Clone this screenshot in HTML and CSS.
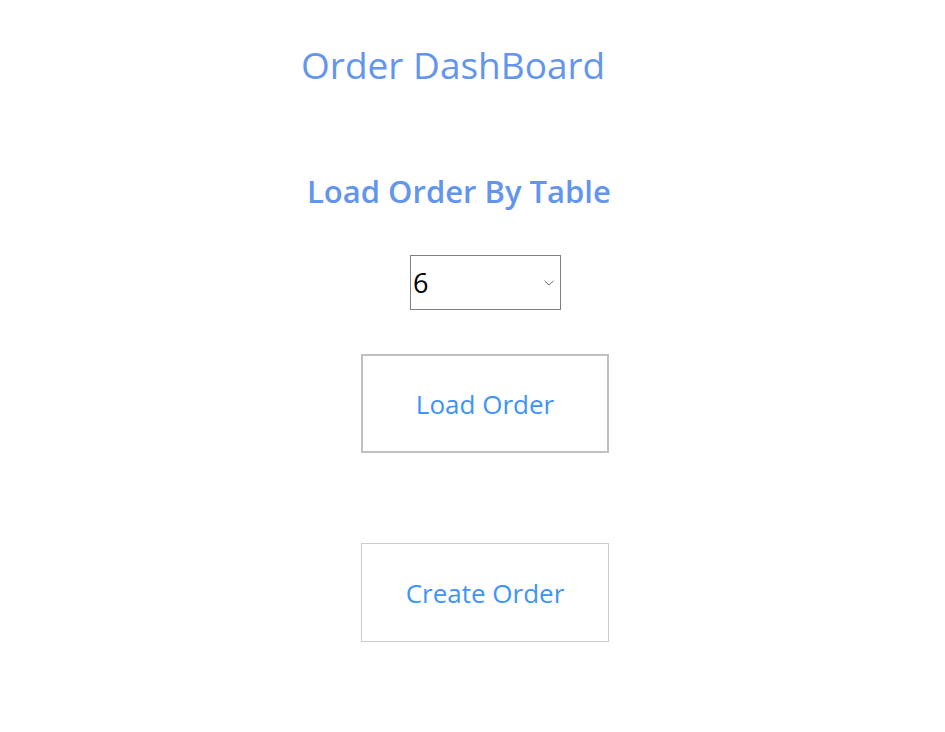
FILE: index.html
```html
<!DOCTYPE html>
<html>
<head>
<meta charset="utf-8">
<link rel="stylesheet" href="styles.css">
</head>
<body>
<div class="page">
  <h1 class="title">Order DashBoard</h1>
  <h2 class="subtitle">Load Order By Table</h2>
  <div class="select-wrap">
    <select class="table-select">
      <option>1</option><option>2</option><option>3</option><option>4</option><option>5</option>
      <option selected>6</option>
    </select>
    <svg class="chevron" width="10" height="6" viewBox="0 0 10 6"><path d="M0.5 0.8 L5 5 L9.5 0.8" fill="none" stroke="#707070" stroke-width="1"/></svg>
  </div>
  <button class="btn btn-load">Load Order</button>
  <button class="btn btn-create">Create Order</button>
</div>
</body>
</html>
```
FILE: styles.css
```css
html, body { margin: 0; padding: 0; background: #fff; }
body { font-family: "Open Sans", "Noto Sans", sans-serif; }
.page {
  display: flex;
  flex-direction: column;
  align-items: flex-start;
}
.title {
  margin: 41px 0 0 301px;
  font-size: 37px;
  font-weight: 400;
  line-height: 48px;
  color: #6495ed;
}
.subtitle {
  margin: 82px 0 0 307px;
  font-size: 31px;
  font-weight: 600;
  line-height: 40px;
  color: #6495ed;
}
.select-wrap {
  position: relative;
  margin: 44px 0 0 410px;
  width: 151px;
  height: 55px;
}
.table-select {
  appearance: none;
  -webkit-appearance: none;
  width: 151px;
  height: 55px;
  font-family: "Open Sans", sans-serif;
  font-size: 27px;
  border: 1px solid #808080;
  background: #fff;
  color: #000;
  padding: 0 0 0 2px;
  border-radius: 0;
  outline: none;
}
.chevron {
  position: absolute;
  right: 7px;
  top: 25px;
  pointer-events: none;
}
.btn {
  width: 248px;
  height: 99px;
  background: #fff;
  font-family: "Open Sans", sans-serif;
  font-size: 26px;
  color: #3d94f6;
  margin-left: 361px;
  cursor: pointer;
  padding: 0;
}
.btn-load {
  margin-top: 44px;
  border: 2px solid #c0c0c0;
}
.btn-create {
  margin-top: 90px;
  border: 1px solid #cccccc;
}
```
